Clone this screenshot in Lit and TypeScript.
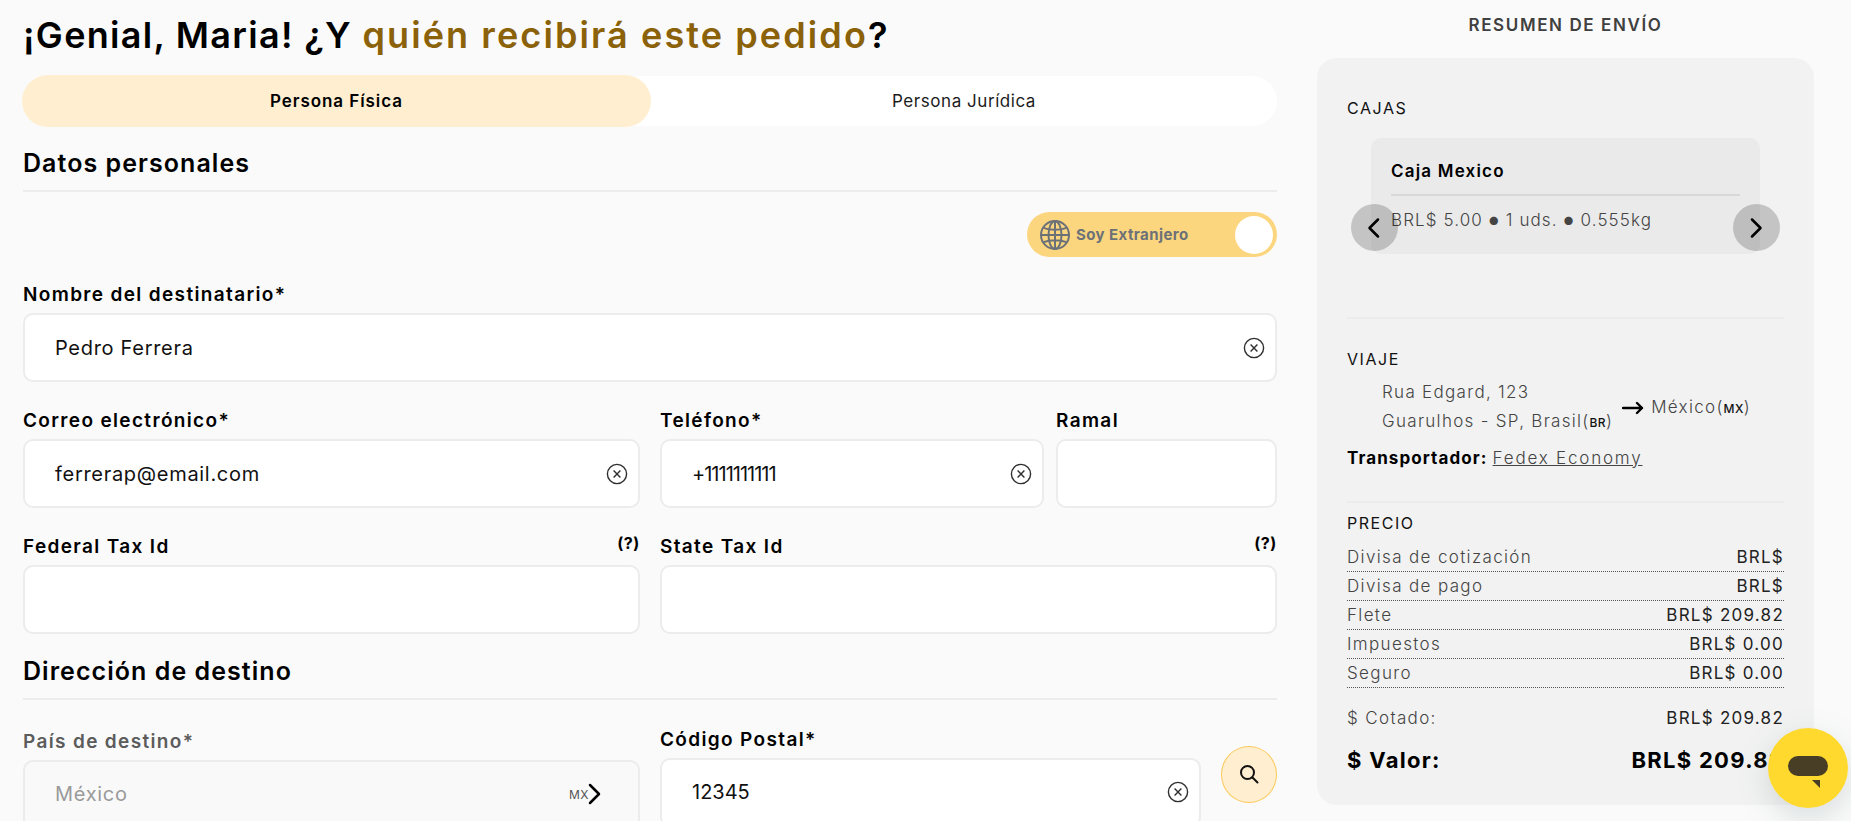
import { LitElement, html, css, svg } from "lit";
import { customElement } from "lit/decorators.js";

const clearIcon = html`<svg class="clear" viewBox="0 0 22 22" width="22" height="22" fill="none" stroke="#2f2f2f" stroke-width="1.4"><circle cx="11" cy="11" r="9.6"/><path d="M7.6 7.6l6.8 6.8M14.4 7.6l-6.8 6.8"/></svg>`;

const chevron = (d: string) => html`<svg viewBox="0 0 24 24" width="24" height="24" fill="none" stroke="#000" stroke-width="2.5" stroke-linecap="round" stroke-linejoin="round"><path d=${d}/></svg>`;

const globe = svg`<circle cx="15" cy="15" r="14"/><ellipse cx="15" cy="15" rx="6.5" ry="14"/><path d="M15 1v28M1.5 15h27M3.6 7.8c6 2.6 16.8 2.6 22.8 0M3.6 22.2c6-2.6 16.8-2.6 22.8 0"/>`;

@customElement("app-root")
export class AppRoot extends LitElement {
  static styles = css`
    :host {
      display: flex;
      gap: 40px;
      width: 1851px;
      height: 821px;
      overflow: hidden;
      box-sizing: border-box;
      padding-left: 23px;
      background: #fafafa;
      color: #000;
      font-family: Inter, "Liberation Sans", sans-serif;
    }
    * { box-sizing: border-box; }

    .left { width: 1254px; flex: none; padding-top: 14px; }
    .title {
      margin: 0 0 20px;
      font-size: 36px;
      line-height: 42px;
      font-weight: 600;
      letter-spacing: 1.3px;
      white-space: nowrap;
    }
    .title span { color: #8b6109; letter-spacing: 2.1px; }

    .tabs {
      display: grid;
      grid-template-columns: 628px 1fr;
      height: 50px;
      background: #fff;
      border-radius: 25px;
    }
    .tab {
      display: flex;
      align-items: center;
      justify-content: center;
      font-size: 17px;
      letter-spacing: 0.55px;
      color: #1c1c1c;
    }
    .tab.on {
      margin: -1px 0 -1px -1px;
      background: #ffefd0;
      border-radius: 26px;
      font-weight: 600;
      letter-spacing: 0.93px;
      color: #000;
    }

    .section {
      margin: 22px 0 0;
      padding-bottom: 12px;
      border-bottom: 2px solid #ececec;
      font-size: 25px;
      line-height: 30px;
      font-weight: 600;
      letter-spacing: 1.05px;
    }
    .section.second { margin-top: 0; }

    .toggle-row { display: flex; justify-content: flex-end; margin: 20px 0 26px; }
    .toggle {
      display: flex;
      align-items: center;
      width: 250px;
      height: 45px;
      padding: 0 4px 0 13px;
      border-radius: 23px;
      background: #fbd67e;
      color: #6c7178;
      font-size: 15px;
      font-weight: 700;
      letter-spacing: 0.42px;
      white-space: nowrap;
    }
    .toggle svg { flex: none; margin-right: 6px; }
    .toggle .knob {
      margin-left: auto;
      width: 38px;
      height: 38px;
      border-radius: 50%;
      background: #fff;
    }

    .row { display: grid; column-gap: 20px; margin-bottom: 27px; }
    .r1 { grid-template-columns: 1fr; }
    .r2 { grid-template-columns: 617px 384px 1fr; }
    .r2 .ramal { margin-left: -8px; }
    .r3 { grid-template-columns: 617px 617px; margin-bottom: 22px; }
    .r4 { grid-template-columns: 617px 541px 56px; margin-top: 27.5px; }

    .field { min-width: 0; }
    .label-line { display: flex; justify-content: space-between; height: 24px; margin-bottom: 6px; }
    .label { font-size: 19px; line-height: 24px; font-weight: 600; letter-spacing: 1.35px; white-space: nowrap; }
    .hint { font-size: 16px; font-weight: 700; line-height: 16px; letter-spacing: 0.6px; }
    .input {
      display: flex;
      align-items: center;
      height: 69px;
      padding: 0 10px 0 30px;
      background: #fff;
      border: 2px solid #ececec;
      border-radius: 10px;
      font-size: 20px;
      color: #111;
      letter-spacing: 0.7px;
    }
    .input span { flex: 1; }
    .input .phone { letter-spacing: -1px; }
    .input .zip { letter-spacing: 0; }
    .clear { flex: none; }
    .disabled { margin-top: 2px; }
    .disabled .label { color: #5c5c5c; }
    .disabled .input { background: #f9f9f9; color: #9a9a9a; padding-right: 35px; }
    .disabled .code { flex: none; font-size: 12px; letter-spacing: 0.5px; color: #555; }
    .disabled svg { flex: none; margin: 0 -3px 0 -7px; }
    .search {
      display: flex;
      align-items: center;
      justify-content: center;
      align-self: start;
      margin-top: 18px;
      width: 56px;
      height: 57px;
      border: 1px solid #fbc95c;
      border-radius: 50%;
      background: #ffefd0;
    }

    .right { width: 497px; flex: none; }
    .summary-title {
      height: 58px;
      padding-top: 15px;
      text-align: center;
      font-size: 17px;
      line-height: 20px;
      font-weight: 600;
      letter-spacing: 1.6px;
      color: #404040;
    }
    .panel {
      height: 747px;
      padding: 39px 30px 0;
      background: #f2f2f2;
      border-radius: 20px;
    }
    .head { font-size: 16px; line-height: 22px; letter-spacing: 1.55px; color: #111; }

    .carousel { position: relative; margin: 19px 0 63px; padding: 0 24px; }
    .card {
      height: 116px;
      padding: 21px 20px 0;
      background: #eaeaea;
      border-radius: 10px;
    }
    .card-title {
      padding-bottom: 11px;
      border-bottom: 2px solid #d8d8d8;
      font-size: 17px;
      line-height: 24px;
      font-weight: 600;
      letter-spacing: 1.2px;
    }
    .card-body {
      margin-top: 12px;
      font-size: 17px;
      line-height: 24px;
      font-weight: 300;
      letter-spacing: 1.1px;
      color: #444;
      white-space: nowrap;
    }
    .dot { font-size: 11px; vertical-align: 1px; }
    .nav {
      position: absolute;
      top: 66px;
      display: flex;
      align-items: center;
      justify-content: center;
      width: 47px;
      height: 47px;
      border-radius: 50%;
      background: rgba(0, 0, 0, 0.19);
    }
    .nav.prev { left: 3.5px; }
    .nav.next { right: 4.5px; }

    .block { border-top: 2px solid #ebebeb; }
    .viaje { padding-top: 29px; height: 184px; }
    .route {
      display: flex;
      align-items: center;
      margin-top: 8px;
      padding-left: 35px;
      font-size: 17px;
      line-height: 29px;
      font-weight: 300;
      letter-spacing: 1.3px;
      color: #444;
      white-space: nowrap;
    }
    .route small { font-size: 12px; font-weight: 500; color: #111; letter-spacing: 0.4px; }
    .route svg { margin: 0 7px 0 9px; flex: none; }
    .carrier { margin-top: 9px; font-size: 17px; line-height: 24px; font-weight: 700; letter-spacing: 1.08px; white-space: nowrap; }
    .carrier a { font-weight: 300; color: #444; text-decoration: underline; letter-spacing: 1.8px; }

    .precio { padding-top: 9px; }
    .rows { margin-top: 9px; }
    .line {
      display: flex;
      justify-content: space-between;
      height: 29px;
      padding-top: 2px;
      border-bottom: 1px dotted #555;
      font-size: 17px;
      line-height: 24px;
      font-weight: 300;
      letter-spacing: 1.35px;
      color: #444;
    }
    .line b, .quoted b { font-weight: 400; color: #222; letter-spacing: 1.25px; }
    .quoted {
      display: flex;
      justify-content: space-between;
      margin-top: 18px;
      font-size: 17px;
      line-height: 24px;
      font-weight: 300;
      letter-spacing: 1.35px;
      color: #444;
    }
    .total {
      display: flex;
      justify-content: space-between;
      margin-top: 15px;
      font-size: 22px;
      line-height: 30px;
      font-weight: 700;
      letter-spacing: 1.3px;
      white-space: nowrap;
    }

    .chat {
      position: fixed;
      left: 1768px;
      top: 728px;
      width: 80px;
      height: 80px;
      border-radius: 50%;
      background: #ffd92e;
      box-shadow: 0 10px 30px rgba(120, 140, 140, 0.25);
    }
    .chat svg { display: block; }
  `;

  private field(label: string, value = "", clear = false, hint = false, cls = "", valueCls = "") {
    return html`<div class="field ${cls}">
      <div class="label-line">
        <div class="label">${label}</div>
        ${hint ? html`<div class="hint">(?)</div>` : ""}
      </div>
      <div class="input"><span class=${valueCls}>${value}</span>${clear ? clearIcon : ""}</div>
    </div>`;
  }

  render() {
    return html`
      <main class="left">
        <h1 class="title">¡Genial, Maria! ¿Y <span>quién recibirá este pedido</span>?</h1>
        <div class="tabs">
          <div class="tab on">Persona Física</div>
          <div class="tab">Persona Jurídica</div>
        </div>
        <h2 class="section">Datos personales</h2>
        <div class="toggle-row">
          <div class="toggle">
            <svg viewBox="0 0 30 30" width="30" height="30" fill="none" stroke="#6c7178" stroke-width="2">${globe}</svg>
            Soy Extranjero
            <div class="knob"></div>
          </div>
        </div>
        <div class="row r1">${this.field("Nombre del destinatario*", "Pedro Ferrera", true)}</div>
        <div class="row r2">
          ${this.field("Correo electrónico*", "ferrerap@email.com", true)}
          ${this.field("Teléfono*", "+1111111111", true, false, "", "phone")}
          ${this.field("Ramal", "", false, false, "ramal")}
        </div>
        <div class="row r3">
          ${this.field("Federal Tax Id", "", false, true)}
          ${this.field("State Tax Id", "", false, true)}
        </div>
        <h2 class="section second">Dirección de destino</h2>
        <div class="row r4">
          <div class="field disabled">
            <div class="label-line"><div class="label">País de destino*</div></div>
            <div class="input">
              <span>México</span>
              <div class="code">MX</div>
              ${chevron("M8 3l9 9-9 9")}
            </div>
          </div>
          ${this.field("Código Postal*", "12345", true, false, "", "zip")}
          <div class="search">
            <svg viewBox="0 0 24 24" width="24" height="24" fill="none" stroke="#111" stroke-width="2" stroke-linecap="round"><circle cx="10.5" cy="10.5" r="6.5"/><path d="M15.5 15.5l5 5"/></svg>
          </div>
        </div>
      </main>

      <aside class="right">
        <div class="summary-title">RESUMEN DE ENVÍO</div>
        <div class="panel">
          <div class="head">CAJAS</div>
          <div class="carousel">
            <div class="card">
              <div class="card-title">Caja Mexico</div>
              <div class="card-body">BRL$ 5.00 <span class="dot">●</span> 1 uds. <span class="dot">●</span> 0.555kg</div>
            </div>
            <div class="nav prev">${chevron("M16 3.5L7.5 12l8.5 8.5")}</div>
            <div class="nav next">${chevron("M8 3.5l8.5 8.5L8 20.5")}</div>
          </div>

          <div class="block viaje">
            <div class="head">VIAJE</div>
            <div class="route">
              <div>Rua Edgard, 123<br />Guarulhos - SP, Brasil(<small>BR</small>)</div>
              <svg viewBox="0 0 22 14" width="22" height="14" fill="none" stroke="#000" stroke-width="2.4" stroke-linecap="round" stroke-linejoin="round"><path d="M1 7h19M15 2l5 5-5 5"/></svg>
              <div>México(<small>MX</small>)</div>
            </div>
            <div class="carrier">Transportador: <a>Fedex Economy</a></div>
          </div>

          <div class="block precio">
            <div class="head">PRECIO</div>
            <div class="rows">
              <div class="line"><span>Divisa de cotización</span><b>BRL$</b></div>
              <div class="line"><span>Divisa de pago</span><b>BRL$</b></div>
              <div class="line"><span>Flete</span><b>BRL$ 209.82</b></div>
              <div class="line"><span>Impuestos</span><b>BRL$ 0.00</b></div>
              <div class="line"><span>Seguro</span><b>BRL$ 0.00</b></div>
            </div>
            <div class="quoted"><span>$ Cotado:</span><b>BRL$ 209.82</b></div>
            <div class="total"><span>$ Valor:</span><span>BRL$ 209.82</span></div>
          </div>
        </div>
      </aside>

      <div class="chat">
        <svg viewBox="0 0 80 80" width="80" height="80"><rect x="20" y="28" width="40" height="20" rx="10" fill="#483d25"/><path d="M44 52h8v8z" fill="#483d25"/></svg>
      </div>
    `;
  }
}
